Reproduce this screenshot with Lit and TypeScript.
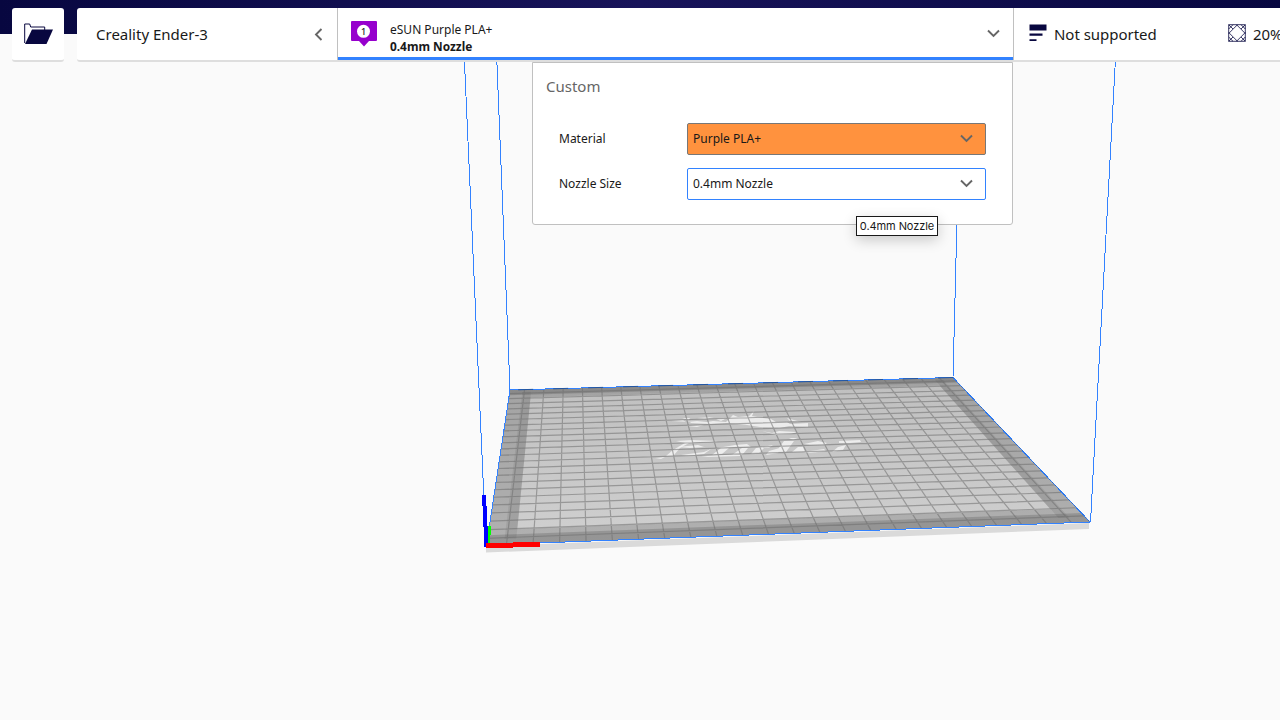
import { LitElement, html, css, svg } from "lit";
import { customElement } from "lit/decorators.js";

type Pt = [number, number];

const BED = 235;
const CORNERS: Pt[] = [[486.5, 545], [1090, 522], [953, 377.5], [510, 390]];

// Perspective mapping from bed millimetres to screen pixels.
function makeProjection([a, b, c, d]: Pt[]) {
  const sx = a[0] - b[0] + c[0] - d[0];
  const sy = a[1] - b[1] + c[1] - d[1];
  const dx1 = b[0] - c[0], dx2 = d[0] - c[0];
  const dy1 = b[1] - c[1], dy2 = d[1] - c[1];
  const det = dx1 * dy2 - dx2 * dy1;
  const g = (sx * dy2 - dx2 * sy) / det;
  const h = (dx1 * sy - sx * dy1) / det;
  return (x: number, y: number): Pt => {
    const u = x / BED, v = y / BED;
    const w = g * u + h * v + 1;
    return [
      ((b[0] - a[0] + g * b[0]) * u + (d[0] - a[0] + h * d[0]) * v + a[0]) / w,
      ((b[1] - a[1] + g * b[1]) * u + (d[1] - a[1] + h * d[1]) * v + a[1]) / w,
    ];
  };
}

const project = makeProjection(CORNERS);
const poly = (pts: Pt[]) =>
  "M" + pts.map(([x, y]) => { const p = project(x, y); return `${p[0].toFixed(2)} ${p[1].toFixed(2)}`; }).join("L");
const rect = (x0: number, y0: number, x1: number, y1: number) =>
  poly([[x0, y0], [x1, y0], [x1, y1], [x0, y1]]) + "Z";

const STEPS = Array.from({ length: 23 }, (_, i) => 7.5 + i * 10);
const GRID = STEPS.map((s) => poly([[s, 0], [s, BED]]) + poly([[0, s], [BED, s]])).join("");

const chevron = html`<svg class="chev" viewBox="0 0 14 14"><path d="M2 3.5L7.5 9L13 3.5" /></svg>`;

@customElement("build-plate")
class BuildPlate extends LitElement {
  static styles = css`
    :host { display: block; width: 1280px; height: 720px; }
    svg { display: block; width: 100%; height: 100%; }
    .grid { fill: none; stroke: #6e6e6e; stroke-opacity: 0.55; stroke-width: 1.2; }
    .edge { fill: none; stroke: #3282ff; stroke-width: 1; shape-rendering: crispEdges; }
    .shade { fill: #000; fill-opacity: 0.15; }
    .inner { fill: #000; fill-opacity: 0.07; }
    .logo { fill: #fff; fill-opacity: 0.68; }
  `;
  render() {
    return svg`<svg viewBox="0 0 1280 720">
      <defs><linearGradient id="bed" x1="0" y1="0" x2="0" y2="1">
        <stop offset="0" stop-color="#bfbfbf"/><stop offset="1" stop-color="#d0d0d0"/>
      </linearGradient></defs>
      <path d="M486 546L1089 523V529L486 552.5Z" fill="#dadada"/>
      <path d=${rect(0, 0, BED, BED)} fill="url(#bed)"/>
      <path class="shade" d=${rect(0, 0, 11, BED)}/>
      <path class="shade" d=${rect(BED - 11, 0, BED, BED)}/>
      <path class="shade" d=${rect(11, 0, BED - 11, 17)}/>
      <path class="shade" d=${rect(11, BED - 16, BED - 11, BED)}/>
      <path class="inner" d=${rect(6.5, 6, 11, 230)}/>
      <path class="inner" d=${rect(BED - 11, 6, BED - 6.5, 230)}/>
      <path class="shade" d=${rect(0, 0, BED, 11)}/>
      <path class="shade" d=${rect(0, BED - 11, BED, BED)}/>
      <g class="logo">
        <path d="M671 421L683 420L686 422L697 421L707 422L713 421L726 422L733 415L738 417L749 416L754 411L752 416L763 418L771 419L776 422L787 422L790 424L808 423V427L789 426L780 428L760 427L747 425L727 423L711 424L691 423L690 422Z"/>
        <path d="M682 418L690 418L689 420ZM697 418L714 417L705 419ZM716 419L727 418L721 421ZM687 426L704 425L697 427ZM776 414L784 416ZM787 418L801 422L790 421Z"/>
        <path d="M762 431L772 433L779 431L797 432L791 434L776 435ZM789 438L798 438L793 440Z"/>
        <path d="M676 441L692 440L718 441L710 442L689 443L680 448L674 455L666 456L673 450L685 443Z"/>
        <path d="M655 458L665 457L661 459ZM677 447L698 445L704 447L690 448ZM681 455L704 452L711 449L704 454L688 456Z"/>
        <path d="M717 448L735 445L747 444L751 447L738 447L724 448ZM721 448L729 448L722 454L712 455ZM742 448L748 448L743 454L732 455ZM756 448L764 448L759 453L751 454Z"/>
        <path d="M756 448L773 445L769 448ZM784 441L794 441L786 452L776 452ZM769 451L783 447L778 453L766 455Z"/>
        <path d="M804 444L818 441L827 443L824 445L810 445ZM798 447L803 447L805 452L792 452ZM803 452L824 449L826 451L810 453Z"/>
        <path d="M839 441L860 440L861 442L850 443L839 443ZM838 447L846 445L843 450L832 452ZM701 456L742 454L740 456L708 457Z"/>
      </g>
      <path class="grid" d=${GRID}/>
      <path class="edge" d="M510 389.5L496 40M486 545L463.5 40M953 377L958 180M1090.5 522L1116.5 40"/>
      <path class="edge" d=${rect(0, 0, BED, BED)}/>
      <path d="M953 377.5L510 390" stroke="#24569f" stroke-width="1" stroke-dasharray="15 20" fill="none"/>
      <path d="M953 377.5L1090 522" stroke="#24569f" stroke-width=".7" stroke-dasharray="2 2" fill="none"/>
      <path d="M488 545L490 526" stroke="#0f0" stroke-width="3" shape-rendering="crispEdges"/>
      <path d="M486.5 547L484 495" stroke="#00f" stroke-width="4" shape-rendering="crispEdges"/>
      <path d="M486 546L540 544" stroke="#f00" stroke-width="5" shape-rendering="crispEdges"/>
    </svg>`;
  }
}

@customElement("app-root")
class AppRoot extends LitElement {
  static styles = css`
    :host {
      display: grid; grid-template: 720px / 1280px; overflow: hidden;
      background: #fafafa; color: #191919; font: 12px/17px "Noto Sans", sans-serif;
    }
    build-plate, .ui { grid-area: 1 / 1; }
    .ui { z-index: 1; min-width: 0; background: linear-gradient(90deg, #070740, #18145a 50%, #070740) 0 0 / 100% 34px no-repeat; }
    .bar { display: flex; gap: 13px; padding: 8px 0 0 12px; width: 1400px; box-sizing: border-box; }
    .card { box-sizing: border-box; height: 54px; background: #fff; border-bottom: 2px solid #dedede; border-radius: 3px; }
    .open { width: 52px; display: flex; justify-content: center; padding-top: 14px; }
    .open svg { width: 30px; height: 24px; }
    .stages { flex: 1; display: flex; }
    .printer { width: 260px; box-sizing: border-box; display: flex; align-items: center; justify-content: space-between; padding: 0 12px 0 19px; font-size: 15px; }
    .chev { width: 14px; height: 14px; display: block; fill: none; stroke: #666; stroke-width: 1.9; }
    .printer .chev { transform: rotate(90deg); }
    .config { box-sizing: border-box; width: 677px; height: 52px; display: flex; align-items: center; padding: 0 13px 0 13px; border: solid #c0c0c0; border-width: 0 1px; box-shadow: inset 0 -3px #3282ff; }
    .badge { width: 26px; height: 26px; margin-right: 13px; }
    .badge text { font: 500 9px "Noto Sans", sans-serif; text-anchor: middle; fill: #191919; }
    .names { flex: 1; padding-top: 8px; }
    .names b { display: block; font-weight: 700; font-size: 11.85px; }
    .summary { display: flex; align-items: center; padding-left: 15px; font-size: 15px; letter-spacing: -0.03px; white-space: nowrap; }
    .summary svg { width: 18px; height: 18px; position: relative; top: -1px; }
    .quality { margin-left: 7px; width: 174px; }
    .infill { margin-left: 7px; }
    .popup { box-sizing: border-box; width: 481px; height: 163px; margin-left: 532px; padding: 15px 26px 0 13px; background: #fff; border: 1px solid #c0c0c0; border-radius: 0 0 3px 3px; }
    .title { font-size: 15px; color: #666; margin-bottom: 28px; }
    .row { display: grid; grid-template-columns: 128px 299px; align-items: center; padding-left: 13px; margin-bottom: 13px; }
    .row > span { padding-bottom: 2px; }
    .select { box-sizing: border-box; height: 32px; display: flex; align-items: center; justify-content: space-between; padding: 0 12px 2px 5px; border: 1px solid #3282ff; border-radius: 2px; background: #fff; }
    .select .chev { margin-top: 1px; }
    .material { background: #ff923e; border-color: #777; }
    .tip { position: absolute; left: 856px; top: 216px; z-index: 2; box-sizing: border-box; width: 82px; height: 20px; border: 1px solid #191919; background: #fff; font: 11px/19px Inter, sans-serif; letter-spacing: -0.08px; text-align: center; white-space: nowrap; box-shadow: 0 4px 14px #0003; }
  `;
  render() {
    return html`
      <build-plate></build-plate>
      <div class="ui">
        <div class="bar">
          <div class="card open">
            <svg viewBox="0 0 30 24"><path d="M1.7 21V2h5l1 3h14v4" fill="none" stroke="#08073f" stroke-width="1"/><path d="M2 22L9 7.5H30L23.5 22Z" fill="#08073f"/></svg>
          </div>
          <div class="card stages">
            <div class="printer"><span>Creality Ender-3</span>${chevron}</div>
            <div class="config">
              <svg class="badge" viewBox="0 0 26 26"><path d="M1 0H25Q26 0 26 1V19Q26 20 25 20H18L13 25.5L8 20H1Q0 20 0 19V1Q0 0 1 0Z" fill="#9600cd"/><circle cx="12.5" cy="10.3" r="6.5" fill="#fff"/><text x="12.5" y="13.7">1</text></svg>
              <div class="names">eSUN Purple PLA+<b>0.4mm Nozzle</b></div>
              ${chevron}
            </div>
            <div class="summary">
              <svg viewBox="0 0 18 18" fill="#08073f"><path d="M.5 .5h17v6H.5zM.5 9.5h13v2.2H.5zM.5 15.2h7v1.7H.5z"/></svg>
              <span class="quality">Not supported</span>
              <svg viewBox="0 0 18 18" fill="none" stroke="#08073f" stroke-width=".8"><path d="M.7 .7H17.3V17.3H.7ZM5 .7L.7 5M9.5 .7L.7 9.5M13 .7L17.3 5M8.5 .7L17.3 9.5M.7 13L5 17.3M.7 8.5L9.5 17.3M17.3 13L13 17.3M17.3 8.5L8.5 17.3M.7 .7L5 5M17.3 .7L13 5M.7 17.3L5 13M17.3 17.3L13 13"/></svg>
              <span class="infill">20%</span>
            </div>
          </div>
        </div>
        <div class="popup">
          <div class="title">Custom</div>
          <div class="row"><span>Material</span><div class="select material">Purple PLA+${chevron}</div></div>
          <div class="row"><span>Nozzle Size</span><div class="select">0.4mm Nozzle${chevron}</div></div>
        </div>
      </div>
      <div class="tip">0.4mm Nozzle</div>
    `;
  }
}
